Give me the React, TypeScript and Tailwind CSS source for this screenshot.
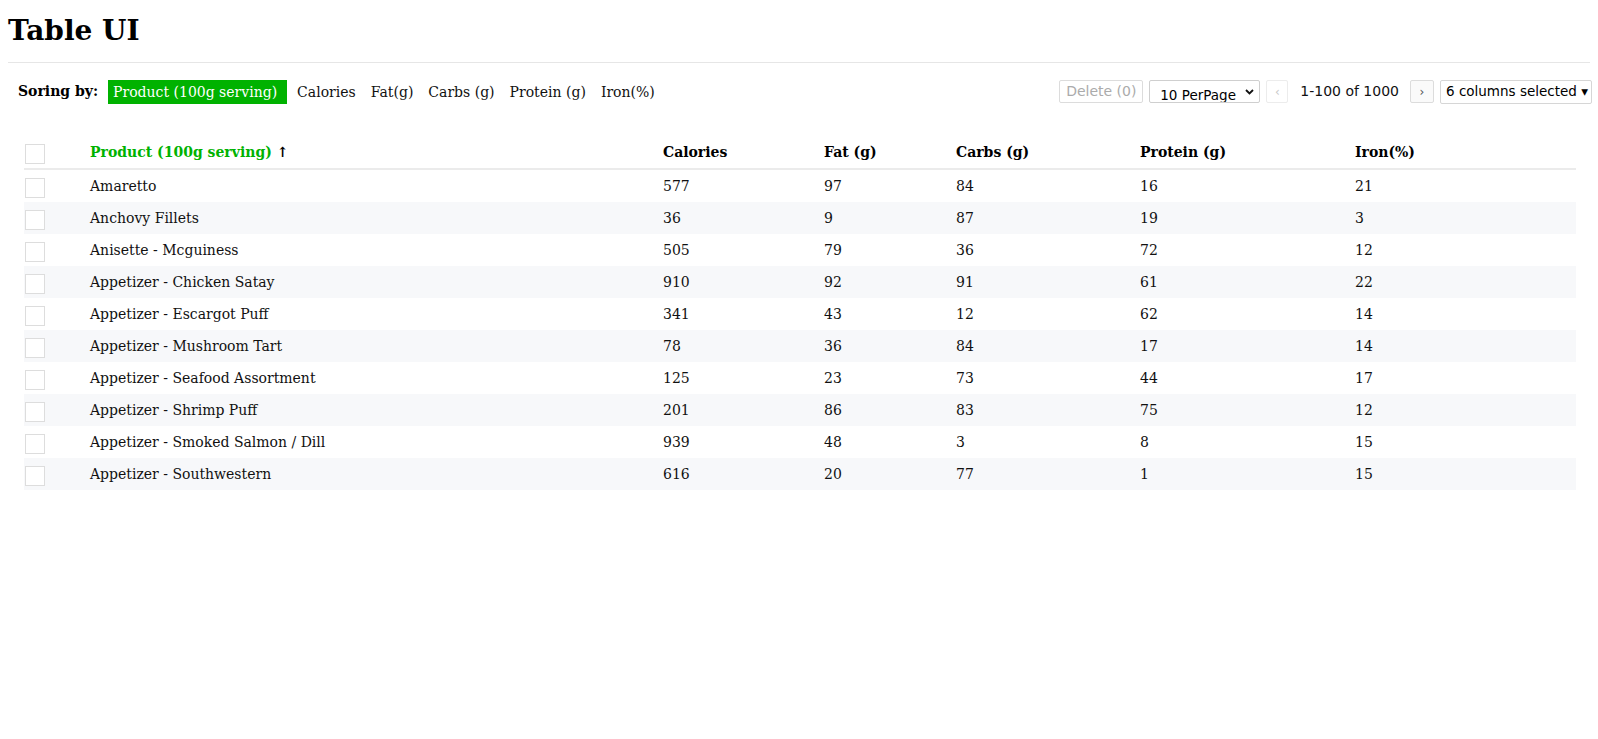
import React from "react";

const rows: [string, number, number, number, number, number][] = [
  ["Amaretto", 577, 97, 84, 16, 21],
  ["Anchovy Fillets", 36, 9, 87, 19, 3],
  ["Anisette - Mcguiness", 505, 79, 36, 72, 12],
  ["Appetizer - Chicken Satay", 910, 92, 91, 61, 22],
  ["Appetizer - Escargot Puff", 341, 43, 12, 62, 14],
  ["Appetizer - Mushroom Tart", 78, 36, 84, 17, 14],
  ["Appetizer - Seafood Assortment", 125, 23, 73, 44, 17],
  ["Appetizer - Shrimp Puff", 201, 86, 83, 75, 12],
  ["Appetizer - Smoked Salmon / Dill", 939, 48, 3, 8, 15],
  ["Appetizer - Southwestern", 616, 20, 77, 1, 15],
];

const gridCols = "grid grid-cols-[66px_573px_161px_132px_184px_215px_1fr]";

function Box() {
  return <div className="ml-px h-[20px] w-[20px] translate-y-[2px] border border-[#dddddd] bg-white" />;
}

export default function App() {
  return (
    <div className="min-h-[739px] w-full bg-white font-['DejaVu_Serif',serif] text-[14px] text-[#111]">
      <h1 className="pl-[8px] pt-[14px] text-[28px] font-bold leading-[33px] text-black">Table UI</h1>
      <div className="mx-[8px] mt-[15px] border-t border-[#e6e6e6]" />

      <div className="mt-[16px] flex h-[25px] items-center justify-between pl-[18px] pr-[6px]">
        <div className="flex items-center">
          <span className="mr-[10px] font-bold text-black">Soring by:</span>
          <div className="flex items-center gap-[5px] leading-[16px]">
            <span className="bg-[#00b200] py-[4px] pl-[5px] pr-[10px] text-white">Product (100g serving)</span>
            <span className="px-[5px] py-[4px]">Calories</span>
            <span className="px-[5px] py-[4px]">Fat(g)</span>
            <span className="px-[5px] py-[4px]">Carbs (g)</span>
            <span className="px-[5px] py-[4px]">Protein (g)</span>
            <span className="px-[5px] py-[4px]">Iron(%)</span>
          </div>
        </div>
        <div className="flex shrink-0 items-center gap-[6px] font-['DejaVu_Sans',sans-serif] text-[14px]">
          <div className="flex h-[23px] w-[84px] shrink-0 items-center justify-center rounded-[2px] border border-[#dcdcdc] bg-white text-[#ababab]">
            Delete (0)
          </div>
          <div className="relative h-[23px] w-[111px] shrink-0 overflow-hidden rounded-[2px] border border-[#cfcfcf] bg-white">
            <span className="absolute left-[10px] top-[6px] text-[13.5px] leading-[17px] text-black">10 PerPage</span>
            <svg className="absolute right-[5px] top-[8px]" width="9" height="6" viewBox="0 0 9 6">
              <path d="M1 1l3.5 3.5L8 1" fill="none" stroke="#111" strokeWidth="1.8" />
            </svg>
          </div>
          <div className="flex h-[23px] w-[22px] shrink-0 items-center justify-center rounded-[2px] border border-[#ececec] bg-white text-[12px] text-[#c8c8c8]">
            ‹
          </div>
          <span className="ml-[6px] mr-[5px] whitespace-nowrap text-[#111]">1-100 of 1000</span>
          <div className="flex h-[23px] w-[24px] shrink-0 items-center justify-center rounded-[2px] border border-[#dcdcdc] bg-[#fafafa] text-[12px] text-[#555]">
            ›
          </div>
          <div className="flex h-[24px] w-[152px] shrink-0 items-center whitespace-nowrap rounded-[2px] border border-[#d6d6d6] bg-white pl-[5px] text-[13.5px] text-black">
            6 columns selected ▾
          </div>
        </div>
      </div>

      <div className="ml-[24px] mr-[22px] mt-[32px]">
        <div className={`${gridCols} h-[34px] items-center border-b-2 border-[#ebebeb] font-bold text-black`}>
          <div>
            <Box />
          </div>
          <div>
            <span className="text-[#00b200]">Product (100g serving)</span> ↑
          </div>
          <div>Calories</div>
          <div>Fat (g)</div>
          <div>Carbs (g)</div>
          <div>Protein (g)</div>
          <div>Iron(%)</div>
        </div>
        {rows.map((r, i) => (
          <div
            key={r[0]}
            className={`${gridCols} h-[32px] items-center ${i % 2 === 1 ? "bg-[#f7f8fa]" : "bg-white"}`}
          >
            <div>
              <Box />
            </div>
            <div>{r[0]}</div>
            <div>{r[1]}</div>
            <div>{r[2]}</div>
            <div>{r[3]}</div>
            <div>{r[4]}</div>
            <div>{r[5]}</div>
          </div>
        ))}
      </div>
    </div>
  );
}
